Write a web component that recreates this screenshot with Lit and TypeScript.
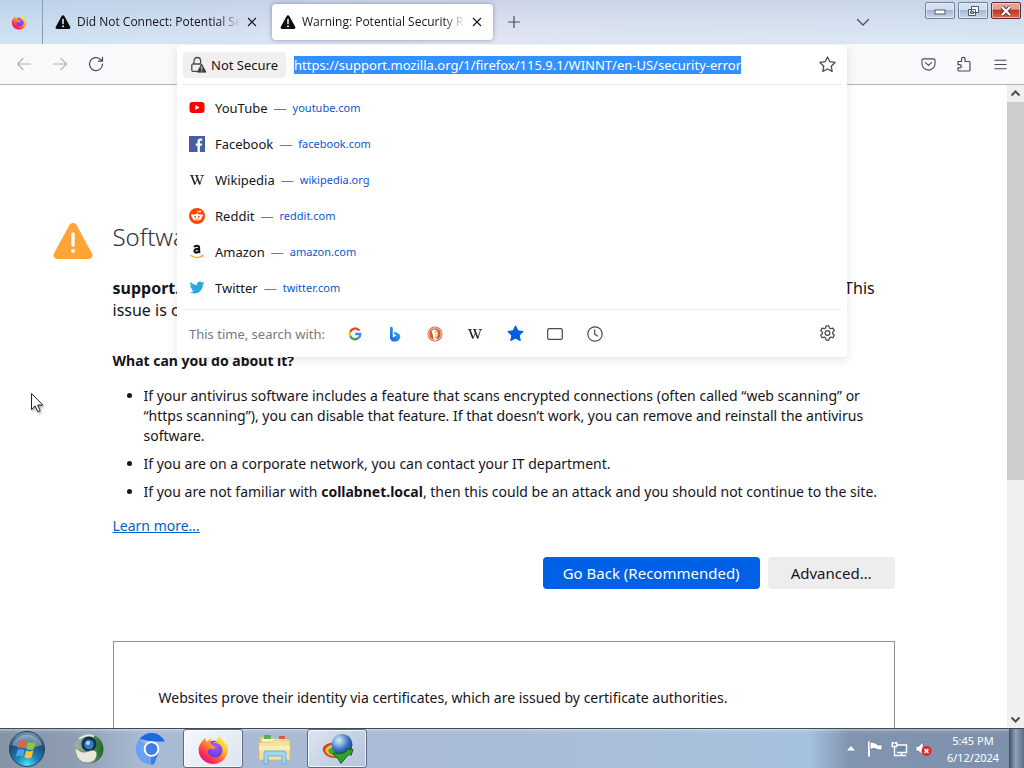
import { LitElement, html, css } from "lit";
import { customElement, query } from "lit/decorators.js";

const warn16 = html`<svg width="16" height="16" viewBox="0 0 16 16"><path d="M8 1.200c.6 0 1 .3 1.300.8l5.900 10.800c.6 1-.1 2.200-1.300 2.200H2.100C.9 15 .2 13.800.8 12.800L6.700 2C7 1.500 7.400 1.200 8 1.200z" fill="#0c0c0d"/><path d="M8 5.500v4" stroke="#dfe9f3" stroke-width="1.600" stroke-linecap="round"/><circle cx="8" cy="12.200" r="1" fill="#dfe9f3"/></svg>`;

const closeX = html`<svg width="10" height="10" viewBox="0 0 10 10"><path d="M1 1l8 8M9 1L1 9" stroke="#15141a" stroke-width="1.100"/></svg>`;

const blade = "M15.200 6.200c-.2-.6-.7-1.300-1.100-1.500.3.600.5 1.200.6 1.700-.600-1.600-1.700-2.200-2.600-3.600-.300-.5-.4-.8-.5-1.300-1.300.8-1.800 2.200-1.900 3-.7 0-1.400.2-2 .6 0 0 .9-.2 1.600-.1 2 .2 3.400 1.800 3.400 3.600 0 2.100-1.800 3.700-3.900 3.600-2.200-.2-3.400-1.800-3.500-3 .2-.8 1-1.500 2-1.200.6.200 1.300.1 1.900-.5.100-.2-.9-.9-1.400-1.400-.5-.5-.7-.700-.9-.900C6.500 4.400 6.800 3.300 7.300 2.700 6.100 3 5.300 3.800 4.800 4.400c-.5-.3-.5-1.600-.3-2-.9.500-1.800 1.300-2.300 2.200C1.300 5.700.8 7 .8 8.400c0 4 3.300 7.100 7.300 7.100 3.700 0 6.700-2.600 7.200-6.100.2-1.100.1-2.200-.1-3.200z";
const firefoxLogo = (size: number, id: string) => html`<svg width=${size} height=${size} viewBox="0 0 16 16">
  <defs>
    <linearGradient id=${id} x1=".85" y1=".1" x2=".15" y2=".95">
      <stop offset="0" stop-color="#fff04a"/><stop offset=".3" stop-color="#ffb52e"/><stop offset=".55" stop-color="#ff6a3a"/><stop offset=".8" stop-color="#f5275e"/><stop offset="1" stop-color="#d9157c"/>
    </linearGradient>
    <radialGradient id=${id + "p"} cx=".6" cy=".3" r=".8"><stop offset="0" stop-color="#a259ff"/><stop offset="1" stop-color="#5230c8"/></radialGradient>
  </defs>
  <circle cx="8.300" cy="8.500" r="4.800" fill=${`url(#${id}p)`}/>
  <path d=${blade} fill=${`url(#${id})`}/>
</svg>`;

const stroke = (d: string, size = 16, color = "#4a4a52") =>
  html`<svg width=${size} height=${size} viewBox="0 0 16 16" fill="none" stroke=${color} stroke-width="1.200" stroke-linecap="round" stroke-linejoin="round"><path d=${d}/></svg>`;

const STAR = "M8 .9l2.200 4.500 4.900.7-3.600 3.500.9 4.900L8 12.200l-4.400 2.300.9-4.900L.9 6.100l4.900-.7z";
const wiki = html`<svg width="16" height="16" viewBox="0 0 16 16" fill="none" stroke="#222"><path d="M1 3.500h3.600M6 3.500h3.600M11.500 3.500H15" stroke-width=".8"/><path d="M2.600 3.500L6 12.400M7.400 3.500l3.500 8.900" stroke-width="1.600"/><path d="M5.900 12.400l2.500-5.500M10.800 12.400l2.900-8.900" stroke-width=".8"/></svg>`;

const sites = [
  { name: "YouTube", url: "youtube.com", icon: html`<svg width="16" height="16" viewBox="0 0 16 16"><rect x=".5" y="2" width="15" height="11" rx="3" fill="#f00"/><path d="M6.400 5.100v4.800L10.600 7.500z" fill="#fff"/></svg>` },
  { name: "Facebook", url: "facebook.com", icon: html`<svg width="16" height="16" viewBox="0 0 16 16"><path d="M0 0h16v16H0z" fill="#4460a0"/><path d="M8.500 16V9.800H6.700V7.400h1.800V5.700c0-2 1.200-3.100 3-3.100.9 0 1.500.1 1.700.1v2.100h-1.200c-1 0-1.100.5-1.100 1.100v1.500h2.200l-.3 2.400h-1.900V16z" fill="#fff"/></svg>` },
  { name: "Wikipedia", url: "wikipedia.org", icon: wiki },
  { name: "Reddit", url: "reddit.com", icon: html`<svg width="16" height="16" viewBox="0 0 16 16"><circle cx="8" cy="8" r="8" fill="#ff4500"/><ellipse cx="8" cy="9.300" rx="4.700" ry="3.300" fill="#fff"/><circle cx="3.400" cy="7.600" r="1.300" fill="#fff"/><circle cx="12.600" cy="7.600" r="1.300" fill="#fff"/><circle cx="11" cy="3.600" r="1" fill="#fff"/><path d="M8 6.300l.6-2.900 2.300.4" fill="none" stroke="#fff" stroke-width=".7"/><circle cx="6.200" cy="8.700" r=".9" fill="#ff4500"/><circle cx="9.800" cy="8.700" r=".9" fill="#ff4500"/><path d="M6 10.800q2 1.200 4 0" fill="none" stroke="#ff4500" stroke-width=".7"/></svg>` },
  { name: "Amazon", url: "amazon.com", icon: html`<svg width="16" height="16" viewBox="0 0 16 16" fill="none"><path d="M5.300 3.200C5.700 1.500 10.100 1 10.100 3.500v3.600c0 .9.400 1.200.8 1.700M9.900 4.800c-2.800 0-4.400.4-4.400 2.200 0 2.200 3.500 2.200 4.400-.3" stroke="#111" stroke-width="2.100"/><path d="M1.500 11.200c3.800 2.900 8.700 2.900 12 .7" stroke="#f5a623" stroke-width="1.300"/><path d="M12 11.100l2.400-.1-.5 2.300" stroke="#f5a623" stroke-width=".9"/></svg>` },
  { name: "Twitter", url: "twitter.com", icon: html`<svg width="16" height="16" viewBox="0 0 16 16"><path d="M15.300 2.900c-.5.300-1.100.4-1.700.5.600-.4 1.100-1 1.300-1.700-.6.400-1.200.6-1.900.8A3 3 0 0 0 7.900 5.200C5.400 5.100 3.200 3.900 1.700 2.100c-.8 1.400-.4 3.100.9 4-.5 0-.9-.1-1.400-.4 0 1.500 1 2.700 2.400 3-.4.100-.9.100-1.300 0 .4 1.200 1.500 2.100 2.800 2.100A6 6 0 0 1 .7 12.100c1.400.9 3 1.400 4.600 1.400 5.600 0 8.800-4.800 8.600-9 .6-.4 1.100-1 1.400-1.600z" fill="#26a9e1"/></svg>` },
];

const engines = [
  { name: "Google", icon: html`<svg width="14" height="14" viewBox="0 0 16 16" fill="none" stroke-width="2.600"><path d="M13 4.100A6 6 0 0 0 2.600 5.500" stroke="#ea4335"/><path d="M2.600 5.500a6 6 0 0 0 0 5" stroke="#fbbc05"/><path d="M2.600 10.500a6 6 0 0 0 9.400 2" stroke="#34a853"/><path d="M12 12.500A6 6 0 0 0 14 8H8.200" stroke="#4285f4"/></svg>` },
  { name: "Bing", icon: html`<svg width="16" height="16" viewBox="0 0 16 16"><defs><linearGradient id="bg" x1="0" y1="1" x2="1" y2="0"><stop offset="0" stop-color="#1a5fd8"/><stop offset=".6" stop-color="#2a96ee"/><stop offset="1" stop-color="#4fd0e8"/></linearGradient></defs><path d="M3 .5l2.800 1v10L9.500 9.500 7.800 8.700 6.700 5.800c3.500 1 6.300 1.900 6.600 4.200.3 2.600-1.500 4.800-4 5.500C6 16 3.200 14.800 3 12z" fill="url(#bg)"/></svg>` },
  { name: "DuckDuckGo", icon: html`<svg width="16" height="16" viewBox="0 0 16 16"><circle cx="8" cy="8" r="7.500" fill="#de5833"/><circle cx="8" cy="8" r="6.200" fill="none" stroke="#fff" stroke-width=".8"/><path d="M4.700 5c1.300-2.600 5.600-2 6 1.600l-.3 3.400q-1 .8-.4 3.600c-1 .4-2.200.3-3.100 0z" fill="#fff"/><path d="M8.200 7.800l3.400.2-.8 1.400-2.600.1z" fill="#fdd20a"/><circle cx="8.800" cy="5.900" r=".7" fill="#2d4f8e"/><path d="M8 10.500l3 .2-.4 1.900-2.300-.4z" fill="#65bc46"/></svg>` },
  { name: "Wikipedia", icon: wiki },
  { name: "Bookmarks", icon: html`<svg width="17" height="17" viewBox="0 0 16 16"><path d=${STAR} fill="#0060df" stroke="#0060df" stroke-linejoin="round"/></svg>` },
  { name: "Tabs", icon: stroke("M2 2.600h12a1.300 1.300 0 0 1 1.300 1.300v8.200a1.300 1.300 0 0 1-1.300 1.300H2A1.300 1.300 0 0 1 .7 12.100V3.900A1.300 1.300 0 0 1 2 2.600z") },
  { name: "History", icon: stroke("M15.200 8A7.200 7.200 0 1 1 .8 8a7.200 7.200 0 0 1 14.400 0zM7.700 3.800v4.400l2.800 1.900") },
];

const orb = html`<svg width="38" height="38" viewBox="0 0 38 38">
  <defs><radialGradient id="orb" cx=".5" cy=".95" r=".9"><stop offset="0" stop-color="#4fe3f5"/><stop offset=".35" stop-color="#1b83b8"/><stop offset=".75" stop-color="#1c4a78"/><stop offset="1" stop-color="#6d8fae"/></radialGradient></defs>
  <circle cx="19" cy="19" r="17.500" fill="url(#orb)" stroke="#27405f"/><path d="M4 15a16 16 0 0 1 30 0q-15 6-30 0z" fill="#fff" opacity=".35"/>
  <path d="M11.500 11.500q3.500-2 7 0l-1.600 6.800q-3.500-1.800-7 .2z" fill="#f0602a"/><path d="M20 12q3.500 1.900 7.500.2l-1.800 7q-3.600 1.600-7.200-.3z" fill="#8cc63e"/>
  <path d="M9.500 20q3.500-2 7-.1l-1.600 6.700q-3.400-1.900-7 .1z" fill="#3fa9e8"/><path d="M18.100 20.400q3.600 1.900 7.200.2l-1.700 6.900q-3.700 1.600-7.200-.3z" fill="#fdc62b"/></svg>`;

const taskIcons = [
  { name: "Webcam viewer", open: false, icon: html`<svg width="32" height="32" viewBox="0 0 32 32"><defs><linearGradient id="cam" x1="0" x2="1"><stop offset="0" stop-color="#a9b5ae"/><stop offset=".6" stop-color="#4b8a55"/><stop offset="1" stop-color="#1b6a2c"/></linearGradient></defs><circle cx="16" cy="16" r="14.500" fill="url(#cam)"/><circle cx="16" cy="11" r="7.500" fill="#16304a"/><circle cx="16" cy="11.500" r="4.800" fill="#2f7fc4"/><circle cx="15" cy="10" r="2" fill="#a9dcff"/><path d="M2 14q5 7 13 4.500 6-2.500 8.500.5 1.500 4-2.500 9-5 3-11 1.300Q2 26 2 14z" fill="#ece7da" stroke="#6c7a6c" stroke-width=".6"/><path d="M6 6q8-6 15-2.500" fill="none" stroke="#e2e9e4" stroke-width="2"/></svg>` },
  { name: "Chromium", open: false, icon: html`<svg width="32" height="32" viewBox="0 0 32 32"><path d="M4.500 6A15 15 0 0 1 30 8.500H17z" fill="#1f68e5"/><path d="M4.500 6A15.500 15.500 0 0 0 16 31.500l7-11z" fill="#6ba2f8"/><path d="M16 31.500h3L24 19l-8 3z" fill="#3f7ee8"/><circle cx="16.500" cy="16" r="7.800" fill="#fff"/><circle cx="16.500" cy="16" r="5.900" fill="#3f7ee8"/></svg>` },
  { name: "Firefox", open: true, icon: firefoxLogo(32, "fxb") },
  { name: "Explorer", open: false, icon: html`<svg width="34" height="32" viewBox="0 0 34 32"><path d="M2 4h12l2 2h14v21H2z" fill="#e8cd77"/><path d="M6 2h7v4H6z" fill="#58b04b"/><path d="M21 3h6v4h-6z" fill="#e2543b"/><path d="M4 6h25v8H4z" fill="#fff8d8"/><path d="M1 9h13l2-2h16v20H1z" fill="#f6e29a" stroke="#d9b95a" stroke-width=".8"/><path d="M1 13h31v4H1z" fill="#fbeeb8"/><path d="M6 31V20q0-2 2-2h18q2 0 2 2v11h-4v-8H10v8z" fill="#9fd4f2" stroke="#5aa4d4" stroke-width=".8"/></svg>` },
  { name: "Download manager", open: true, icon: html`<svg width="34" height="32" viewBox="0 0 34 32"><defs><radialGradient id="globe" cx=".35" cy=".3" r=".8"><stop offset="0" stop-color="#e6f0c0"/><stop offset=".25" stop-color="#8fbdf0"/><stop offset=".55" stop-color="#3f74c4"/><stop offset="1" stop-color="#16336b"/></radialGradient></defs><path d="M15 9Q1 11 3 18q3 8 15 7l-1-4z" fill="#d9412c"/><path d="M15 11Q4 13 5.500 18.500q3 5.500 12.500 5l-1-4z" fill="#f6c52c"/><path d="M15 13.500Q7 15 8.500 19q3 4 10 3z" fill="#3ea843"/><circle cx="22" cy="11.500" r="10.500" fill="url(#globe)"/><path d="M14 20q8 2 13-2.500l-2-1.500 8 .5-2 6-1.500-1.500q-4 3.500-8.500 9.500-2-5-8-9z" fill="#2fa32c" stroke="#135213" stroke-width=".9"/></svg>` },
];

@customElement("browser-tabs")
class BrowserTabs extends LitElement {
  static styles = css`
    :host { display: flex; height: 44px; background: linear-gradient(90deg, rgba(170,210,240,.35), rgba(225,220,242,.3) 45%, rgba(200,222,242,.35)), linear-gradient(#c5d1e4, #d6e1ee 50%, #e4edf6); align-items: stretch; }
    button { font: inherit; color: inherit; background: none; border: 0; padding: 0; display: flex; align-items: center; justify-content: center; }
    svg { flex: none; display: block; }
    .view { width: 43px; padding-right: 4px; border-right: 1px solid #8b9bb0; margin-right: 4px; box-sizing: border-box; }
    .tabs { display: flex; gap: 4px; padding: 4px 0; min-width: 0; }
    .tab { width: 221px; box-sizing: border-box; min-width: 0; display: flex; align-items: center; padding: 0 6px 0 8px; gap: 6px; border-radius: 4px; }
    .tab.on { background: #fff; box-shadow: 0 0 4px rgba(60,70,100,.5); }
    .label { flex: 1; min-width: 0; overflow: hidden; white-space: nowrap; font-family: "Open Sans", sans-serif; font-size: 12px; line-height: 20px; color: #15141a; mask-image: linear-gradient(90deg, #000 calc(100% - 22px), transparent); }
    .close { width: 20px; height: 20px; margin-left: -4px; }
    .new { width: 24px; margin-left: 9px; }
    .spacer { flex: 1; }
    .all { width: 24px; margin-right: 50px; }
    .win { display: flex; gap: 3px; padding: 2px 3px 0 0; }
    .win button { width: 30px; height: 17px; border: 1px solid #6c7f9b; border-radius: 2px; background: linear-gradient(#d3dff0 45%, #a5b9d3 50%, #c8d9ee); box-shadow: inset 0 0 0 1px rgba(255,255,255,.5); }
    .win .x { border-color: #5c2b2b; background: linear-gradient(#e5a08f 40%, #c3351f 50%, #d86a4c); }
  `;
  tab(title: string, on: boolean) {
    return html`<div class="tab ${on ? "on" : ""}" role="tab" aria-selected=${on}>${warn16}<span class="label">${title}</span><button class="close" aria-label="Close tab">${closeX}</button></div>`;
  }
  render() {
    return html`
      <button class="view" aria-label="Firefox View">${firefoxLogo(16, "fxs")}</button>
      <div class="tabs" role="tablist">
        ${this.tab("Did Not Connect: Potential Security Issue", false)}
        ${this.tab("Warning: Potential Security Risk Ahead", true)}
      </div>
      <button class="new" aria-label="New tab">${stroke("M8 2.500v11M2.500 8h11")}</button>
      <span class="spacer"></span>
      <button class="all" aria-label="List all tabs">${stroke("M2.500 5.500L8 11l5.500-5.500")}</button>
      <div class="win">
        <button aria-label="Minimize"><svg width="12" height="8" viewBox="0 0 12 8"><rect x="1" y="3" width="10" height="4" fill="#fff" stroke="#4b5870"/></svg></button>
        <button aria-label="Restore"><svg width="13" height="12" viewBox="0 0 13 12"><path d="M4.500 1.500h7v6h-7zM1.500 4.500h7v6h-7z" fill="#fff" stroke="#4b5870"/><path d="M3.500 6.500h3v2h-3z" fill="#9fb2cc" stroke="#4b5870"/></svg></button>
        <button class="x" aria-label="Close"><svg width="12" height="10" viewBox="0 0 12 10"><path d="M2 1l8 8M10 1L2 9" stroke="#5b2a2a" stroke-width="4"/><path d="M2 1l8 8M10 1L2 9" stroke="#fff" stroke-width="2.400"/></svg></button>
      </div>`;
  }
}

@customElement("browser-toolbar")
class BrowserToolbar extends LitElement {
  static styles = css`
    :host { display: flex; height: 40px; padding: 0 6px; background: #f9f9fb; border-bottom: 1px solid #b4b4b8; align-items: center; }
    button { font: inherit; color: inherit; background: none; border: 0; padding: 0; display: flex; align-items: center; justify-content: center; flex: none; }
    svg { display: block; flex: none; }
    .tool { width: 36px; height: 36px; }
    .tool[disabled] { opacity: .4; }
    .slot { flex: 1; margin: 0 63px; position: relative; align-self: stretch; }
    .panel { position: absolute; top: 1px; left: 0; right: 0; z-index: 2; background: #fff; border-radius: 4px; box-shadow: 0 3px 8px 1px rgba(0,0,0,.09); padding: 0 6px; }
    .bar { display: flex; align-items: center; height: 39px; border-bottom: 1px solid #e6e6ea; }
    .id { height: 26px; padding: 0 8px 0 6px; gap: 4px; background: #f0f0f1; border-radius: 4px; font-size: 13px; color: #15141a; }
    .url { flex: 1; min-width: 0; border: 0; outline: 0; padding: 0; margin-left: 8px; background: none; font: inherit; font-size: 13px; color: #15141a; }
    .url::selection { background: #3390ff; color: #fff; }
    .star { width: 28px; height: 28px; }
    ul { list-style: none; margin: 0; padding: 5px 0 3px; }
    .row { display: flex; align-items: center; height: 36px; padding: 0 6px; text-decoration: none; font-size: 13px; line-height: 18px; color: #15141a; }
    .name { margin-left: 10px; }
    .dash { margin: 0 6px; color: #77777c; }
    .site { font-size: 11px; color: #0b57d0; }
    .oneoff { display: flex; align-items: center; height: 47px; border-top: 1px solid #ececee; }
    .hint { width: 146px; padding-left: 6px; font-size: 13px; color: #78787e; white-space: nowrap; }
    .eng { width: 40px; height: 36px; }
    .gear { margin-left: auto; width: 28px; height: 28px; }
  `;
  @query(".url") input!: HTMLInputElement;
  firstUpdated() {
    this.input.focus();
    this.input.select();
  }
  render() {
    return html`
      <button class="tool" disabled aria-label="Back">${stroke("M14.500 8H1.500M7 2.500L1.500 8 7 13.500")}</button>
      <button class="tool" disabled aria-label="Forward">${stroke("M1.500 8h13M9 2.500L14.500 8 9 13.500")}</button>
      <button class="tool" aria-label="Reload">${stroke("M14.500 8A6.500 6.500 0 1 1 12.300 3.200L14.500 5M14.500 1.300V5.200H10.500", 16)}</button>
      <div class="slot"><div class="panel">
        <div class="bar">
          <button class="id"><svg width="18" height="18" viewBox="0 0 18 18"><path d="M5 8V4.800a3.300 3.300 0 0 1 6.600 0V8M8 15.300H4a1.200 1.200 0 0 1-1.200-1.200V9.300A1.200 1.200 0 0 1 4 8h8" fill="none" stroke="#4a4a52" stroke-width="1.300"/><path d="M12.700 8.200l4.200 7.900H8.300z" fill="#3c3c42" stroke="#3c3c42" stroke-linejoin="round"/><path d="M12.700 10.500v2.700M12.700 14.200v1" stroke="#f0f0f1" stroke-width="1.100"/></svg>Not Secure</button>
          <input class="url" type="text" aria-label="Address" spellcheck="false" value="https://support.mozilla.org/1/firefox/115.9.1/WINNT/en-US/security-error">
          <button class="star" aria-label="Bookmark this page">${stroke(STAR, 17)}</button>
        </div>
        <ul>${sites.map((s) => html`<li><a class="row" href="#">${s.icon}<span class="name">${s.name}</span><span class="dash">—</span><span class="site">${s.url}</span></a></li>`)}</ul>
        <div class="oneoff"><span class="hint">This time, search with:</span>
          ${engines.map((e) => html`<button class="eng" aria-label=${e.name}>${e.icon}</button>`)}
          <button class="gear" aria-label="Search settings">${stroke("M6.700.8h2.600l.5 2 1.300.7 2-.6 1.300 2.300-1.500 1.500v1.500l1.500 1.500-1.300 2.300-2-.6-1.300.8-.5 2H6.700l-.5-2-1.300-.8-2 .6-1.300-2.300 1.500-1.500V6.700L1.600 5.200l1.300-2.300 2 .6 1.300-.7zM10.200 7.500a2.200 2.200 0 1 1-4.400 0 2.200 2.200 0 0 1 4.400 0z", 17)}</button>
        </div>
      </div></div>
      <button class="tool" aria-label="Save to Pocket">${stroke("M2.500 2h11A1.500 1.500 0 0 1 15 3.500V7A7 7 0 0 1 1 7V3.500A1.500 1.500 0 0 1 2.500 2zM4.800 6L8 9l3.200-3", 15)}</button>
      <button class="tool" aria-label="Extensions">${stroke("M2 5.500h3.500V3.200a1.800 1.800 0 0 1 3.600 0v2.300H13a1 1 0 0 1 1 1V14a1 1 0 0 1-1 1H3a1 1 0 0 1-1-1v-2.200h1.700a1.600 1.600 0 0 0 0-3.200H2z")}</button>
      <button class="tool" aria-label="Open menu">${stroke("M2 3.500h12M2 8h12M2 12.500h12", 15)}</button>`;
  }
}

@customElement("error-page")
class ErrorPage extends LitElement {
  static styles = css`
    :host { display: flex; background: #fff; min-height: 0; overflow: hidden; color: #15141a; }
    .view { flex: 1; min-width: 0; overflow: hidden; }
    .layout { display: grid; grid-template-columns: 60px minmax(0, 1fr) 60px; max-width: 902px; margin: 0 auto; padding-top: 132px; }
    .icon { padding-top: 4px; }
    .icon svg { display: block; }
    h1 { font-size: 24px; line-height: 40px; font-weight: 300; margin: 0 0 20px; color: #33323a; white-space: nowrap; }
    .lead { font-size: 16px; line-height: 22px; margin: 0 0 30px; }
    h2 { font-size: 14px; line-height: 20px; margin: 0 0 15px; }
    ul { margin: 0; padding-left: 31px; font-size: 14px; line-height: 20px; }
    li { margin-bottom: 8px; }
    .more { color: #0061c8; font-size: 14px; line-height: 20px; display: inline-block; margin-top: 6px; }
    .actions { display: flex; justify-content: flex-end; gap: 8px; margin-top: 21px; }
    .btn { font: inherit; font-size: 15px; height: 32px; border: 0; border-radius: 4px; padding: 0 23px; background: #ededee; color: #15141a; }
    .primary { background: #0060e6; color: #fff; padding: 0 20px; }
    .details { border: 1px solid #8f8f9a; margin-top: 52px; padding: 46px 45px 300px; font-size: 14px; line-height: 20px; }
    .details p { margin: 0; }
    .scroll { width: 17px; background: #f0f0f0; display: flex; flex-direction: column; align-items: center; }
    .scroll svg { display: block; flex: none; }
    .track { flex: 1; align-self: stretch; }
    .thumb { height: 62%; background: #cdcdcd; }
  `;
  render() {
    return html`
      <div class="view"><main class="layout">
        <div class="icon"><svg width="40" height="40" viewBox="0 0 40 40"><path d="M20 2c1.700 0 2.900.9 3.700 2.300l15.200 27.900c1.500 2.800-.4 5.900-3.500 5.900H4.600c-3.100 0-5-3.100-3.500-5.900L16.300 4.300C17.100 2.900 18.300 2 20 2z" fill="#ffa436"/><path d="M20 13v11" stroke="#fff" stroke-width="3.400" stroke-linecap="round"/><circle cx="20" cy="30" r="2.100" fill="#fff"/></svg></div>
        <div>
          <h1>Software is Preventing Firefox From Safely Connecting</h1>
          <p class="lead"><b>support.mozilla.org</b> is most likely a safe page, but a secure connection could not be established. This issue is caused by <b>collabnet.local</b>, which is either software on your computer or your network.</p>
          <h2>What can you do about it?</h2>
          <ul>
            <li>If your antivirus software includes a feature that scans encrypted connections (often called “web scanning” or “https scanning”), you can disable that feature. If that doesn’t work, you can remove and reinstall the antivirus software.</li>
            <li>If you are on a corporate network, you can contact your IT department.</li>
            <li>If you are not familiar with <b>collabnet.local</b>, then this could be an attack and you should not continue to the site.</li>
          </ul>
          <a class="more" href="#">Learn more…</a>
          <div class="actions"><button class="btn primary">Go Back (Recommended)</button><button class="btn">Advanced…</button></div>
          <div class="details"><p>Websites prove their identity via certificates, which are issued by certificate authorities.</p></div>
        </div>
      </main></div>
      <div class="scroll" aria-hidden="true">
        <svg width="17" height="17" viewBox="0 0 17 17"><path d="M4.500 10.500l4-4 4 4" fill="none" stroke="#505050" stroke-width="2"/></svg>
        <div class="track"><div class="thumb"></div></div>
        <svg width="17" height="17" viewBox="0 0 17 17"><path d="M4.500 6.500l4 4 4-4" fill="none" stroke="#505050" stroke-width="2"/></svg>
      </div>`;
  }
}

@customElement("task-bar")
class TaskBar extends LitElement {
  static styles = css`
    :host { display: flex; height: 39px; border-top: 1px solid #3f4a59; background: linear-gradient(rgba(255,255,255,.45), rgba(255,255,255,.1) 2px, rgba(255,255,255,0) 5px), linear-gradient(90deg, #8694a8, #8f9db2 7%, #a9bbd3 14%, #a9bcd6 50%, #a6c1de 79%, #8094b0 83%, #7e90ab); }
    button { background: none; border: 0; padding: 0; display: flex; align-items: center; justify-content: center; flex: none; }
    svg { display: block; flex: none; }
    .start { width: 54px; margin-right: 5px; }
    .apps { display: flex; gap: 2px; }
    .app { width: 60px; }
    .app.open { border: 1px solid #5c6b80; border-radius: 3px; background: linear-gradient(135deg, #dde5f0, #b3c3da); box-shadow: inset 0 0 0 1px rgba(255,255,255,.75); }
    .app.front { background: linear-gradient(135deg, #f6f8fb, #dbe4f0); }
    .tray { margin-left: auto; display: flex; align-items: center; }
    .tray button { width: 24px; height: 32px; }
    time { width: 72px; padding-left: 2px; text-align: center; font-size: 11px; line-height: 17px; color: #fff; }
    .tray .desk { width: 15px; height: auto; align-self: stretch; background: linear-gradient(90deg, #4c5d73, #90a2b8 40%, #5e7085); border-left: 1px solid #3f4f64; }
  `;
  render() {
    return html`
      <button class="start" aria-label="Start">${orb}</button>
      <div class="apps">${taskIcons.map((t) => html`<button class="app ${t.open ? "open" : ""} ${t.name === "Firefox" ? "front" : ""}" aria-label=${t.name}>${t.icon}</button>`)}</div>
      <div class="tray">
        <button aria-label="Show hidden icons"><svg width="8" height="5" viewBox="0 0 8 5"><path d="M4 0l4 4.500H0z" fill="#fff"/></svg></button>
        <button aria-label="Action Center"><svg width="16" height="18" viewBox="0 0 16 18"><path d="M2 1.500v15" stroke="#fff" stroke-width="2"/><path d="M3 2.500c3-1.500 4 1.500 7 .5v1.500c2 .8 3 .5 5 0v5c-3 1.300-4-.3-6-.5-2-.8-4-.5-6 .5z" fill="#fff" stroke="#4a5a70" stroke-width=".6"/></svg></button>
        <button aria-label="Network"><svg width="17" height="16" viewBox="0 0 17 16"><path d="M6 4h9.500v7.500H6M10.500 12v2.500M7 14.500h8" fill="#6f88a8" stroke="#fff" stroke-width="1.400"/><path d="M1.200 1v4.500h4.600V1M3.500 5.500v9H7M2.500 1v2M4.500 1v2" fill="none" stroke="#fff" stroke-width="1.300"/></svg></button>
        <button aria-label="Volume muted"><svg width="17" height="16" viewBox="0 0 17 16"><path d="M1 5.500h2.500L8 1v13L3.500 10H1z" fill="#fff" stroke="#4a5a70" stroke-width=".5"/><circle cx="11.500" cy="10" r="5" fill="#d92b2b"/><path d="M9.600 8.100l3.800 3.800M13.400 8.100l-3.800 3.800" stroke="#fff" stroke-width="1.500"/></svg></button>
        <time>5:45 PM<br>6/12/2024</time>
        <button class="desk" aria-label="Show desktop"></button>
      </div>`;
  }
}

@customElement("app-root")
class AppRoot extends LitElement {
  static styles = css`
    :host { display: flex; flex-direction: column; height: 100vh; position: relative; overflow: hidden; font-family: "Noto Sans", "Open Sans", sans-serif; }
    .tabs, .toolbar, .tasks { flex: none; }
    .page { flex: 1; }
    .cursor { position: absolute; left: 30px; top: 392px; z-index: 3; pointer-events: none; filter: drop-shadow(1px 2px 1px rgba(0,0,0,.3)); }
  `;
  render() {
    return html`
      <browser-tabs class="tabs"></browser-tabs>
      <browser-toolbar class="toolbar"></browser-toolbar>
      <error-page class="page"></error-page>
      <task-bar class="tasks"></task-bar>
      <svg class="cursor" width="15" height="22" viewBox="0 0 15 22" aria-hidden="true"><path d="M1.500 1.500v16l3.700-3.500 2.600 5.700 2.400-1.100-2.600-5.500h5.200z" fill="#fff" stroke="#222"/></svg>`;
  }
}
